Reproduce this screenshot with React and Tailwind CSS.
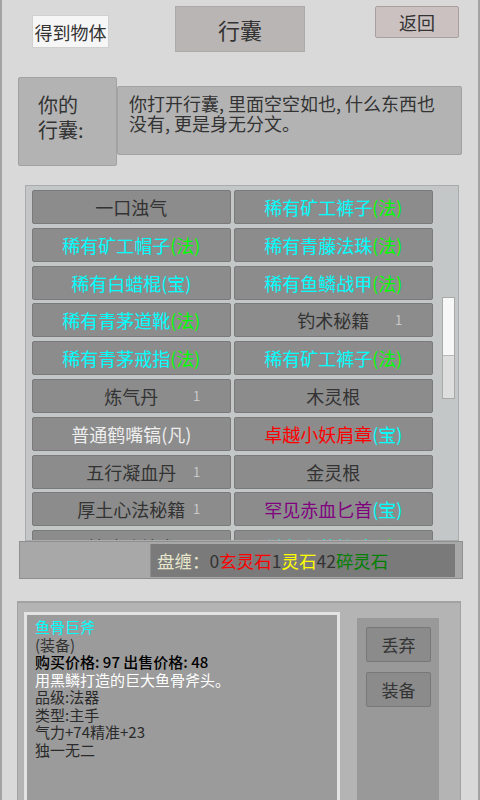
import React from 'react';

const C = '#00ffff';
const G = '#00ff00';
const D = '#333333';

const items = [
  { parts: [['一口浊气', D]] },
  { parts: [['稀有矿工裤子', C], ['(法)', G]] },
  { parts: [['稀有矿工帽子', C], ['(法)', G]] },
  { parts: [['稀有青藤法珠', C], ['(法)', G]] },
  { parts: [['稀有白蜡棍(宝)', C]] },
  { parts: [['稀有鱼鳞战甲', C], ['(法)', G]] },
  { parts: [['稀有青茅道靴', C], ['(法)', G]] },
  { parts: [['钓术秘籍', D]], count: 1 },
  { parts: [['稀有青茅戒指', C], ['(法)', G]] },
  { parts: [['稀有矿工裤子', C], ['(法)', G]] },
  { parts: [['炼气丹', D]], count: 1 },
  { parts: [['木灵根', D]] },
  { parts: [['普通鹤嘴镐(凡)', '#eeeeee']] },
  { parts: [['卓越小妖肩章', '#ff0000'], ['(宝)', C]] },
  { parts: [['五行凝血丹', D]], count: 1 },
  { parts: [['金灵根', D]] },
  { parts: [['厚土心法秘籍', D]], count: 1 },
  { parts: [['罕见赤血匕首', '#800080'], ['(宝)', C]] },
  { parts: [['基础吐纳术', D]] },
  { parts: [['稀有青茅护腕', C], ['(法)', G]] },
];

function Item({ item }) {
  return (
    <div className="relative h-[34px] bg-[#8c8c8c] border border-[#7a7a7a] rounded-[2px] flex items-center justify-center text-[18px] leading-none">
      <span>
        {item.parts.map(([t, c], i) => (
          <span key={i} style={{ color: c }}>{t}</span>
        ))}
      </span>
      {item.count && (
        <span className="absolute left-[160px] top-[9px] text-[13px] text-[#c8c8c8]">{item.count}</span>
      )}
    </div>
  );
}

export default function App() {
  return (
    <div className="w-[480px] h-[800px] overflow-hidden bg-[#d9d9d9] border-x-2 border-[#a3a3a3] text-[#333] font-['Noto_Sans_CJK_SC',sans-serif]">

      {/* Top bar */}
      <div className="h-[77px] flex items-start pt-[6px] pl-[30px]">
        <div className="mt-[9px] w-[77px] h-[33px] bg-[#f6f6f6] border border-[#d0d0d0] flex items-center justify-center text-[18px] leading-none">
          得到物体
        </div>
        <div className="ml-[66px] w-[130px] h-[46px] bg-[#b9b5b5] border border-[#aeaaaa] flex items-center justify-center text-[22px] leading-none">
          行囊
        </div>
        <div className="ml-[70px] w-[84px] h-[32px] bg-[#cbc1c1] border border-[#a99f9f] rounded-[2px] flex items-center justify-center text-[18px] leading-none">
          返回
        </div>
      </div>

      {/* Description */}
      <div className="flex items-start pl-[16px]">
        <div className="w-[99px] h-[89px] bg-[#b3b3b3] border border-[#a2a2a2] rounded-[2px] pl-[19px] pt-[14px] text-[20px] leading-[25px]">
          <div>你的</div>
          <div>行囊:</div>
        </div>
        <div className="mt-[9px] w-[345px] h-[69px] bg-[#b3b3b3] border border-[#a2a2a2] rounded-[2px] pl-[11px] pt-[6px] text-[18px] leading-[20px]">
          你打开行囊, 里面空空如也, 什么东西也<br />没有, 更是身无分文。
        </div>
      </div>

      {/* Item list */}
      <div className="mt-[19px] ml-[23px] w-[434px] h-[356px] overflow-hidden bg-[#c3c7c7] border border-[#a8acac] flex items-start pl-[6px] pt-[4px]">
        <div className="w-[401px] shrink-0 grid grid-cols-[198.5px_198.5px] gap-x-[3.6px] gap-y-[3.8px]">
          {items.map((it, i) => <Item key={i} item={it} />)}
        </div>
        <div className="ml-[9px] mt-[107px] w-[13px] h-[102px] shrink-0 border border-[#a9a9a9] bg-[#dedede] flex flex-col">
          <div className="h-[58px] bg-[#f7f7f7] border-b border-[#b8b8b8]"></div>
        </div>
      </div>

      {/* Money bar */}
      <div className="ml-[17px] w-[444px] h-[38px] bg-[#a8a8a8] border border-[#8f8f8f] pt-[2px] pl-[130px]">
        <div className="w-[305px] h-[33px] bg-[#7a7a7a] border-l border-[#8e8e8e] flex items-center pl-[6px] text-[17.5px] leading-none">
          <span className="text-[#e6e6cc]">盘缠：</span>
          <span className="text-[#333]">0</span>
          <span className="text-[#ff0000]">玄灵石</span>
          <span className="text-[#333]">1</span>
          <span className="text-[#ffff00]">灵石</span>
          <span className="text-[#333]">42</span>
          <span className="text-[#008000]">碎灵石</span>
        </div>
      </div>

      {/* Item detail */}
      <div className="mt-[22px] ml-[15px] w-[444px] h-[210px] bg-[#b4b4b4] border-t-2 border-x border-[#a2a2a2] flex items-start pl-[6px] pt-[9px]">
        <div className="w-[316px] h-[200px] shrink-0 bg-[#9b9b9b] border-[3px] border-[#e3e3e3] pl-[8px] pt-[3px] text-[15px] leading-[17.5px]">
          <div className="text-[#00ffff]">鱼骨巨斧</div>
          <div className="text-[#333]">(装备)</div>
          <div className="text-black font-medium">购买价格: 97 出售价格: 48</div>
          <div className="text-white">用黑鳞打造的巨大鱼骨斧头。</div>
          <div className="text-[#2a2a2a]">品级:法器</div>
          <div className="text-[#2a2a2a]">类型:主手</div>
          <div className="text-[#2a2a2a]">气力+74精准+23</div>
          <div className="text-[#2a2a2a]">独一无二</div>
        </div>
        <div className="ml-[17px] mt-[6px] w-[82px] h-[200px] shrink-0 bg-[#999999] pl-[9px] pt-[9px] flex flex-col gap-[10px]">
          <div className="w-[65px] h-[35px] bg-[#8b8b8b] border border-[#787878] rounded-[2px] flex items-center justify-center text-[17px] leading-none">
            丢弃
          </div>
          <div className="w-[65px] h-[35px] bg-[#8b8b8b] border border-[#787878] rounded-[2px] flex items-center justify-center text-[17px] leading-none">
            装备
          </div>
        </div>
      </div>
    </div>
  );
}
